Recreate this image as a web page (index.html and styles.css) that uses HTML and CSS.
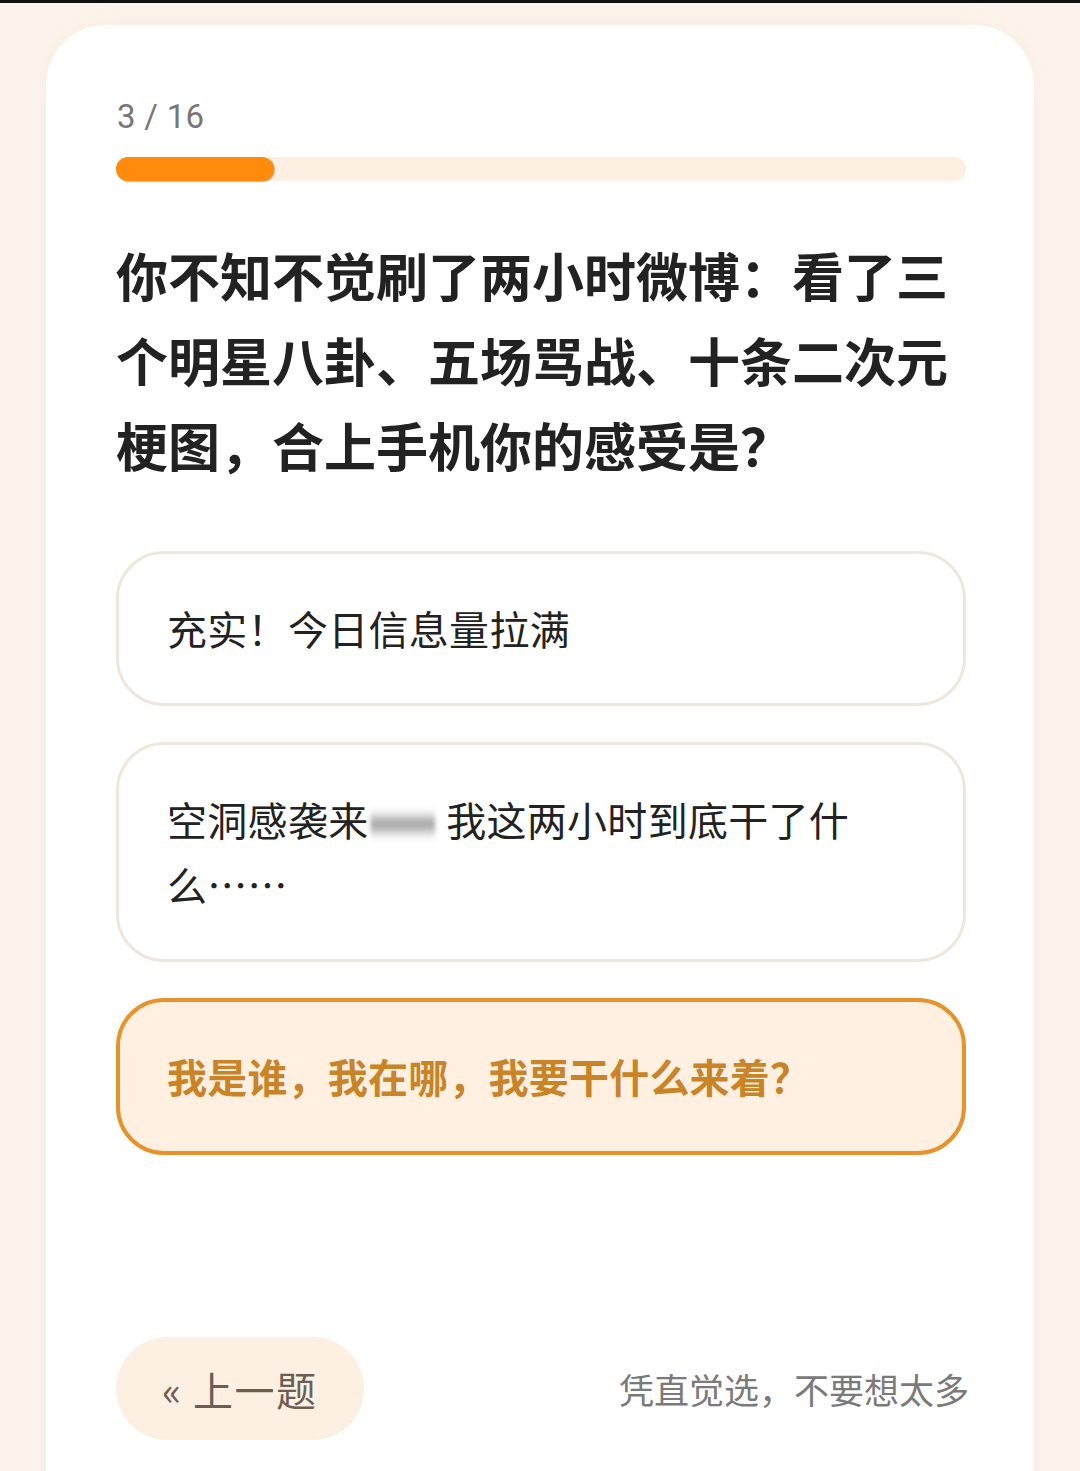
FILE: index.html
```html
<!DOCTYPE html>
<html lang="zh-CN">
<head>
<meta charset="utf-8">
<title>测试</title>
<link rel="stylesheet" href="styles.css">
</head>
<body>
<div class="topline"></div>
<main class="card">
  <div class="counter">3 / 16</div>
  <div class="track"><div class="fill" style="width: 158px"></div></div>
  <h1 class="question">你不知不觉刷了两小时微博：看了三个明星八卦、五场骂战、十条二次元梗图，合上手机你的感受是？</h1>
  <div class="options">
    <div class="option">充实！今日信息量拉满</div>
    <div class="option">空洞感袭来<span class="dash">——</span>我这两小时到底干了什么……</div>
    <div class="option selected">我是谁，我在哪，我要干什么来着？</div>
  </div>
  <div class="footer">
    <button class="prev">« 上一题</button>
    <div class="hint">凭直觉选，不要想太多</div>
  </div>
</main>
</body>
</html>
```
FILE: styles.css
```css
html, body {
  margin: 0;
  padding: 0;
}
body {
  background: #fcf4ec;
  font-family: "Noto Sans CJK SC", "Noto Sans", sans-serif;
  height: 1471px;
  overflow: hidden;
}
.topline {
  height: 3px;
  background: #111;
}
.card {
  margin: 22px 46px 0;
  background: #fff;
  border-radius: 60px;
  padding: 70px 68px 0 70px;
  height: 1500px;
  box-shadow: 0 0 24px rgba(220, 180, 140, 0.12);
}
.counter {
  font-family: Roboto, "Noto Sans", sans-serif;
  font-size: 33px;
  line-height: 44px;
  color: #777;
  padding-left: 1px;
  letter-spacing: 0.3px;
}
.track {
  margin-top: 18px;
  height: 24px;
  border-radius: 12px;
  background: #fdefe2;
}
.fill {
  height: 24px;
  border-radius: 12px;
  background: #ff8a0c;
  box-shadow: 1px 1px 1px rgba(150, 110, 70, 0.5);
}
.question {
  margin: 51px 0 0;
  font-size: 52px;
  font-weight: 700;
  line-height: 85px;
  color: #222;
}
.options {
  margin-top: 64px;
  display: flex;
  flex-direction: column;
  gap: 36px;
}
.option {
  border: 3px solid #efe7dd;
  border-radius: 48px;
  padding: 42px 48px;
  font-size: 40px;
  line-height: 65px;
  color: #222;
  background: #fff;
  letter-spacing: 0.3px;
}
.dash {
  display: inline-block;
  color: #555;
  font-weight: 900;
  letter-spacing: 9px;
  transform: translateY(-10px) scaleY(3);
  filter: blur(2px);
  opacity: 0.6;
}
.option.selected {
  border: 4px solid #e8922c;
  background: #fff0e2;
  color: #c98428;
  font-weight: 700;
  padding: 42px 47px;
  letter-spacing: 0.2px;
}
.footer {
  margin-top: 182px;
  display: flex;
  align-items: center;
  justify-content: space-between;
}
.prev {
  font-family: "Noto Sans CJK SC", "Noto Sans", sans-serif;
  height: 103px;
  padding: 0 46px 0 46px;
  border: none;
  border-radius: 52px;
  background: #fdefe2;
  color: #6b5f55;
  font-size: 40px;
  letter-spacing: 1.5px;
}
.hint {
  font-size: 35px;
  color: #7a7a7a;
  margin-right: -3px;
}
```
